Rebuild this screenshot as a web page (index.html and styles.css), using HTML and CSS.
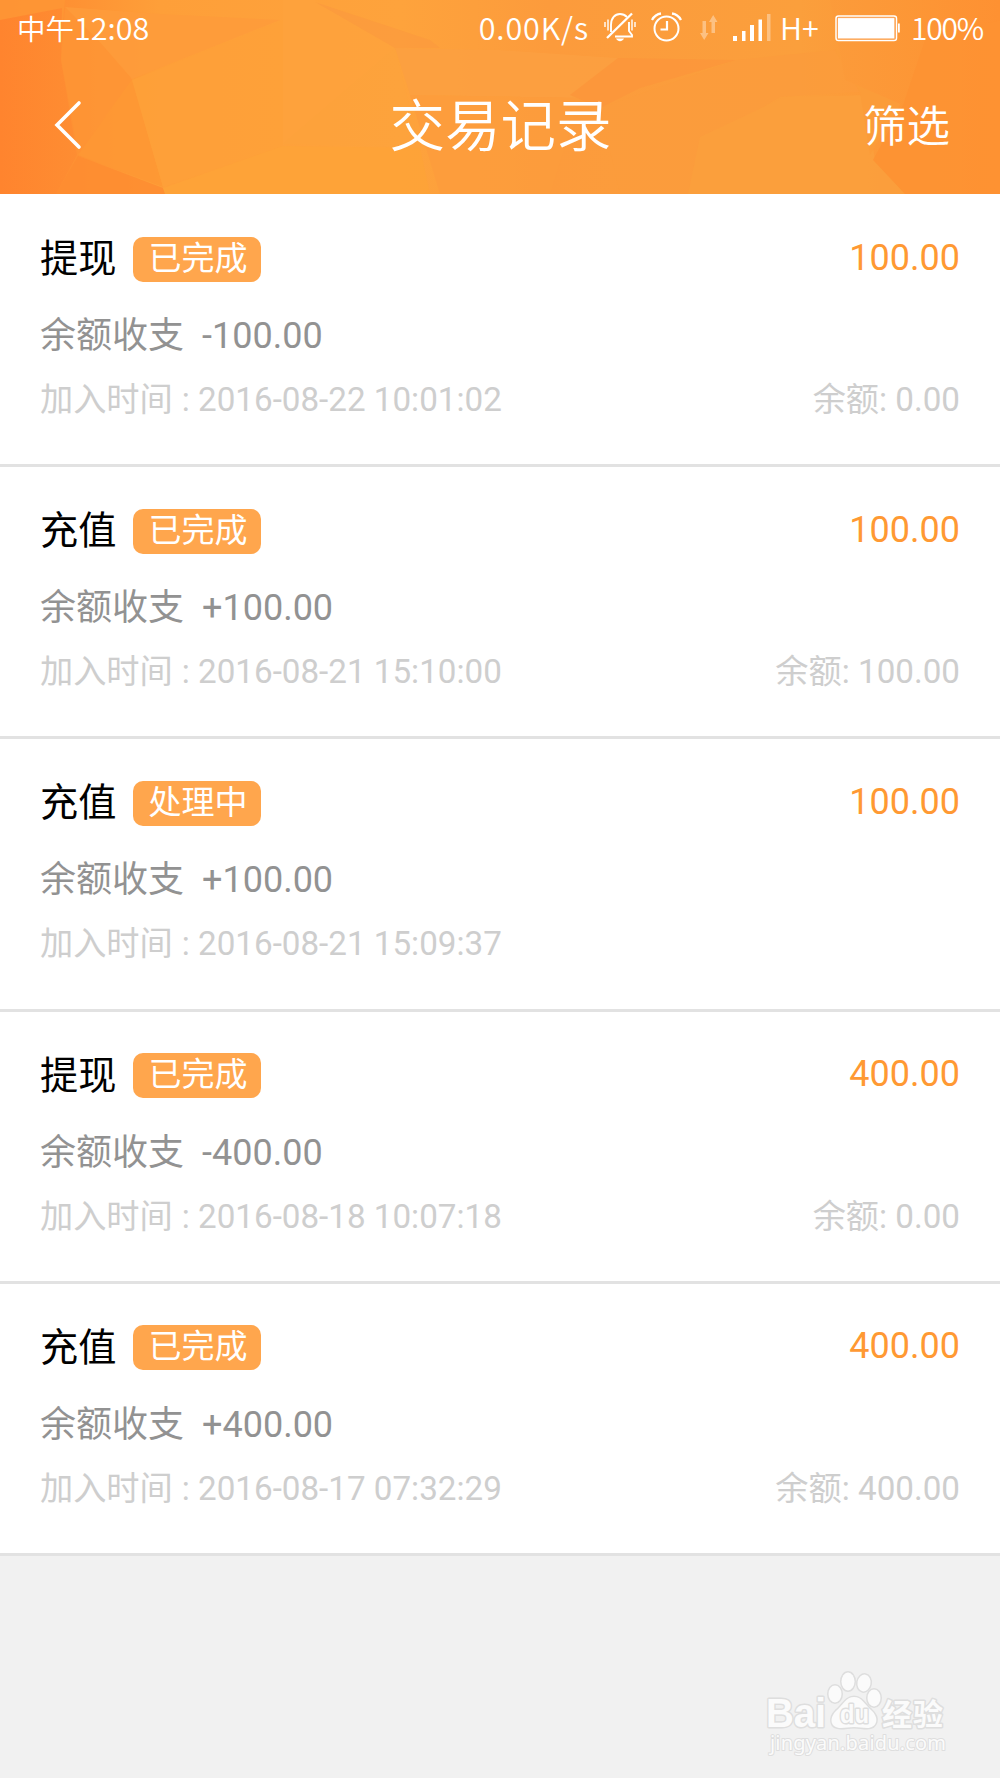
FILE: index.html
```html
<!DOCTYPE html>
<html lang="zh-CN">
<head>
<meta charset="utf-8">
<title>交易记录</title>
<link rel="stylesheet" href="styles.css">
</head>
<body>
<header class="header">
  <svg class="backdrop" viewBox="0 0 1000 194" preserveAspectRatio="none" aria-hidden="true">
    <defs>
      <linearGradient id="base" x1="0" x2="1" y1="0" y2="0">
        <stop offset="0" stop-color="#ff8730"/><stop offset=".07" stop-color="#fe9133"/><stop offset=".16" stop-color="#fe9f39"/>
        <stop offset=".4" stop-color="#fea33c"/><stop offset=".55" stop-color="#fc9b3c"/><stop offset=".8" stop-color="#fb9f3c"/>
        <stop offset="1" stop-color="#fe9031"/>
      </linearGradient>
      <linearGradient id="edge" x1="0" x2="1"><stop offset="0" stop-color="#ff842e"/><stop offset="1" stop-color="#ff8d32"/></linearGradient>
      <linearGradient id="right" x1="0" x2="1"><stop offset="0" stop-color="#fc9b3a"/><stop offset="1" stop-color="#fe9233"/></linearGradient>
    </defs>
    <rect width="1000" height="194" fill="url(#base)"/>
    <g opacity=".85">
    <path fill="#fe9735" d="M0 0H65L60 50 0 50z"/>
    <path fill="url(#edge)" d="M0 20 62 8 61 60 77 155 56 194H0z"/>
    <path fill="#ff9535" d="M65 8 100 13 132 80 78 153 61 60z"/>
    <path fill="#fe9834" d="M132 80 163 187 78 155z"/>
    <path fill="#ff8d31" d="M78 156 163 188 166 194H56z"/>
    <path fill="#fe9c3b" d="M65 7 160 14 280 20 132 79 98 40z"/>
    <path fill="#fea139" d="M132 80 283 20V146L163 187z"/>
    <path fill="#fea33d" d="M283 0H315L395 48 283 146z"/>
    <path fill="#fea438" d="M163 188 283 146 420 148 430 194H165z"/>
    <path fill="#fda33c" d="M283 144 395 48 420 148z"/>
    <path fill="#fc9c3e" d="M315 2 395 48 440 48 430 40z"/>
    <path fill="#fca041" d="M395 48 500 50 618 58 580 98 410 95z"/>
    <path fill="#fd9d3d" d="M410 95 580 98 550 194H440z"/>
    <path fill="#fd973b" d="M570 95 618 58 736 60 640 88 600 108z"/>
    <path fill="#fc9c3c" d="M600 108 736 60 835 50 860 92 780 97 700 145 690 194H620z"/>
    <path fill="#fba03d" d="M700 137 785 97 865 95 875 160 905 194H688z"/>
    <path fill="#fb9d3a" d="M835 50 925 30 900 105 870 155 860 92z"/>
    <path fill="url(#right)" d="M830 0H1000V60L925 60 903 105 845 80z"/>
    <path fill="#fe9333" d="M925 40 1000 20V194H905L873 160 903 105z"/>
    </g>
  </svg>
  <div class="front">
    <div class="status">
      <div class="clock"><span class="noon">中午</span>12:08</div>
      <div class="indicators">
        <span class="speed">0.00K/s</span>
        <svg class="i-mute" width="32" height="30" viewBox="0 0 32 30" fill="none" stroke="#fff" stroke-width="1.9">
          <path d="M7 20V13C7 6 11 2 16 2c3 0 5 1 7 3M25 10v9l3 4v1.500H11"/>
          <path d="M3 26 28 1.500" stroke-width="2.300"/>
          <path d="M1 10v5M4 7.500v11M28 7.500v11M31 10v5" stroke-width="1.400"/>
          <path d="M12 26.500h8c-1 2-2.500 2.700-4 2.700s-3-.7-4-2.700z" fill="#fff" stroke="none"/>
        </svg>
        <svg class="i-alarm" width="31" height="30" viewBox="0 0 31 30" fill="none" stroke="#fff" stroke-width="2">
          <circle cx="15.500" cy="16.500" r="12"/><path d="M16 9v8.500H9.500" stroke-width="2.200"/>
          <path d="M1 8C3 4.500 6 2 10 1.500M21 1.500C25 2 28 4.500 30 8" stroke-width="2.300"/>
        </svg>
        <svg class="i-data" width="18" height="26" viewBox="0 0 18 26" fill="#fff" opacity=".36">
          <path d="M2.500 6h3.500v12H8.500L4.200 25 0 18H2.500zM11.500 18h3.500V7h2.500L13.200 0 9 7h2.500z"/>
        </svg>
        <svg class="i-signal" width="38" height="27" viewBox="0 0 38 27" fill="#fff">
          <path d="M0 22h4v5H0zM9 17h3.500v10H9zM17 11h4v16h-4zM25.500 5.500h3.500V27h-3.500z"/><path d="M34 0h3.500v27H34z" opacity=".36"/>
        </svg>
        <span class="network">H+</span>
        <svg class="i-battery" width="65" height="27" viewBox="0 0 65 27">
          <rect x="1" y="1" width="60.500" height="24.500" rx="2.500" fill="none" stroke="#fff" stroke-width="1.500"/>
          <path d="M2.800 2.800h56.800v21H2.800zM63 8.500h1.800v9H63z" fill="#fff"/>
          <rect x="2.500" y="2.700" width="57.500" height="21.300" fill="none" stroke="#fda55a" stroke-width=".8"/>
        </svg>
        <span class="percent">100%</span>
      </div>
    </div>
    <nav class="nav">
      <svg class="back" width="28" height="50" viewBox="0 0 28 50" fill="none" stroke="#fff" stroke-width="3.600" stroke-linecap="round" stroke-linejoin="miter"><path d="M25 3 3 25 25 47"/></svg>
      <h1 class="title">交易记录</h1>
      <span class="filter">筛选</span>
    </nav>
  </div>
</header>
<main class="list">
  <article class="record">
    <div class="line top"><span class="kind">提现</span><span class="badge">已完成</span><span class="amount">100.00</span></div>
    <div class="line change"><span>余额收支</span><span>-100.00</span></div>
    <div class="line meta"><span class="label">加入时间</span><span class="time">: 2016-08-22 10:01:02</span><span class="balance">余额: 0.00</span></div>
  </article>
  <article class="record">
    <div class="line top"><span class="kind">充值</span><span class="badge">已完成</span><span class="amount">100.00</span></div>
    <div class="line change"><span>余额收支</span><span>+100.00</span></div>
    <div class="line meta"><span class="label">加入时间</span><span class="time">: 2016-08-21 15:10:00</span><span class="balance">余额: 100.00</span></div>
  </article>
  <article class="record">
    <div class="line top"><span class="kind">充值</span><span class="badge">处理中</span><span class="amount">100.00</span></div>
    <div class="line change"><span>余额收支</span><span>+100.00</span></div>
    <div class="line meta"><span class="label">加入时间</span><span class="time">: 2016-08-21 15:09:37</span></div>
  </article>
  <article class="record">
    <div class="line top"><span class="kind">提现</span><span class="badge">已完成</span><span class="amount">400.00</span></div>
    <div class="line change"><span>余额收支</span><span>-400.00</span></div>
    <div class="line meta"><span class="label">加入时间</span><span class="time">: 2016-08-18 10:07:18</span><span class="balance">余额: 0.00</span></div>
  </article>
  <article class="record">
    <div class="line top"><span class="kind">充值</span><span class="badge">已完成</span><span class="amount">400.00</span></div>
    <div class="line change"><span>余额收支</span><span>+400.00</span></div>
    <div class="line meta"><span class="label">加入时间</span><span class="time">: 2016-08-17 07:32:29</span><span class="balance">余额: 400.00</span></div>
  </article>
</main>
<footer class="footer">
  <svg class="watermark" width="190" height="96" viewBox="0 0 190 96" fill="#fbfbfb" stroke="#dedede" stroke-width="3" paint-order="stroke" stroke-linejoin="round">
    <text class="wm-latin" x="4" y="60" textLength="60" lengthAdjust="spacingAndGlyphs">Bai</text>
    <g>
      <ellipse cx="73" cy="27" rx="6.500" ry="8.500"/><ellipse cx="86" cy="14.500" rx="6.500" ry="9"/>
      <ellipse cx="102" cy="16" rx="6.500" ry="8.500" transform="rotate(10 102 16)"/><ellipse cx="112" cy="31" rx="6.500" ry="8.500"/>
      <path d="M92 30c8 0 11 8 17 13 9 8 6 18-4 18-5 0-8-1-13-1s-8 1-13 1c-11 0-12-10-5-17 7-6 10-14 18-14z"/>
    </g>
    <text class="wm-du" x="78" y="56" textLength="29" lengthAdjust="spacingAndGlyphs">du</text>
    <text class="wm-cjk" x="120" y="58" textLength="61">经验</text>
    <text class="wm-url" x="8" y="83" textLength="176">jingyan.baidu.com</text>
  </svg>
</footer>
</body>
</html>
```
FILE: styles.css
```css
* { box-sizing: border-box; }
body {
  margin: 0;
  min-height: 1778px;
  display: flex;
  flex-direction: column;
  background: #f1f1f1;
  font-family: Roboto, "Noto Sans CJK SC", sans-serif;
  font-weight: 400;
}
svg { display: block; flex: none; }

.header { display: grid; height: 194px; color: #fff; overflow: hidden; }
.backdrop, .front { grid-area: 1 / 1; width: 100%; height: 194px; }
.front { z-index: 1; }

.status {
  display: flex;
  justify-content: space-between;
  height: 58px;
  padding: 0 17px;
  font: 350 30.500px/55px "Noto Sans CJK SC", sans-serif;
}
.clock { white-space: nowrap; }
.noon { font-size: 28.500px; }
.indicators { display: flex; align-items: flex-start; }
.speed { letter-spacing: .9px; }
.i-mute { margin: 12px 0 0 15px; }
.i-alarm { margin: 12px 0 0 15px; }
.i-data { margin: 15px 0 0 18px; }
.i-signal { margin: 14px 0 0 15px; }
.network { width: 41px; margin-left: 9px; }
.i-battery { margin: 15px 0 0 14px; }
.percent { width: 72px; margin-left: 11px; font-size: 30px; letter-spacing: -1.200px; }

.nav {
  display: grid;
  grid-template-columns: 1fr auto 1fr;
  align-items: center;
  height: 134px;
  padding: 0 50px 0 54px;
}
.title { margin: 5px 3px 0 0; font-size: 55.500px; font-weight: 350; line-height: 80px; }
.filter { justify-self: end; margin-top: 6px; font-size: 43.500px; font-weight: 350; line-height: 80px; }

.list { padding-top: 1px; background: #fff; }
.record {
  height: 272.200px;
  padding: 37px 40px 0;
  border-bottom: 3px solid #e2e2e2;
}
.line { display: flex; align-items: center; white-space: nowrap; }
.top { height: 54px; line-height: 54px; }
.kind { font-size: 38.200px; color: #000; }
.badge {
  width: 128px;
  height: 45px;
  margin-left: 16.600px;
  padding-left: 2px;
  border-radius: 10px;
  background: #ffa64d;
  color: #fff;
  font-size: 33px;
  line-height: 43px;
  text-align: center;
}
.amount { margin: -3px 0 0 auto; font-size: 36px; color: #ff9933; }
.change { height: 60px; margin-top: 20px; gap: 18px; font-size: 36px; line-height: 60px; color: #929292; }
.meta { height: 50px; margin-top: 9px; font-size: 33.200px; line-height: 50px; color: #cecece; }
.time { margin-left: 9px; }
.balance { margin-left: auto; }

.footer { flex: 1; display: flex; justify-content: flex-end; align-items: flex-end; padding: 0 48px 15px 0; }
.wm-latin { font: 700 40px "Liberation Sans", sans-serif; }
.wm-du { font: 700 26px "Liberation Sans", sans-serif; }
.wm-cjk { font: 700 30px "Noto Sans CJK SC", sans-serif; }
.wm-url { font: 400 20px "Noto Sans", sans-serif; stroke-width: 2px; }
```
